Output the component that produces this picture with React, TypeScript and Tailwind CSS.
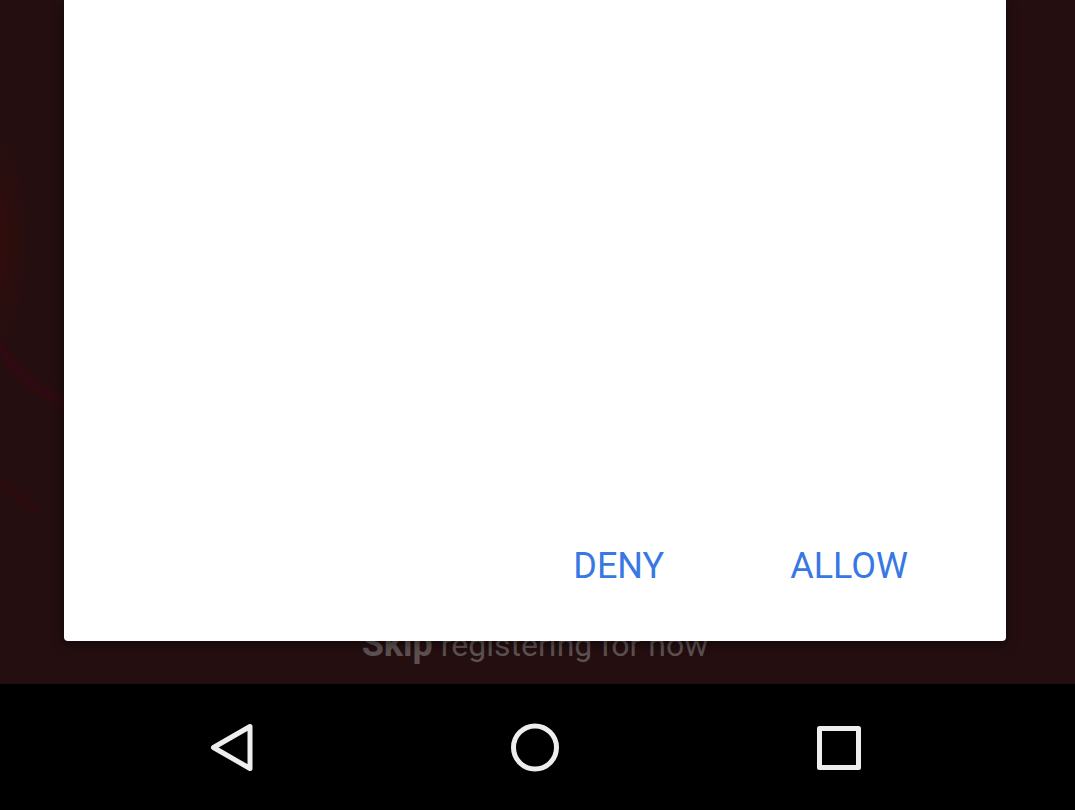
function Backdrop() {
  return (
    <svg className="absolute left-0 top-0 h-full w-16" viewBox="0 0 64 684" preserveAspectRatio="none" fill="none" aria-hidden="true">
      <defs>
        <radialGradient id="ember">
          <stop offset="0" stopColor="#3a0c08" stopOpacity="0.6" />
          <stop offset="1" stopColor="#3a0c08" stopOpacity="0" />
        </radialGradient>
        <filter id="soften" x="-50%" y="-50%" width="200%" height="200%">
          <feGaussianBlur stdDeviation="4" />
        </filter>
      </defs>
      <ellipse cx="0" cy="240" rx="30" ry="120" fill="url(#ember)" />
      <g filter="url(#soften)" stroke="#450a12" strokeWidth="7">
        <path d="M-6 340C16 370 34 392 70 404" opacity="0.5" />
        <path d="M-8 474C4 486 22 502 40 512" opacity="0.3" />
      </g>
    </svg>
  );
}

function PermissionDialog() {
  return (
    <section
      role="dialog"
      aria-label="Permission request"
      className="relative z-10 flex flex-1 flex-col justify-end rounded-b-[4px] bg-white pb-[47px] pl-20 pr-[82px] shadow-[0_2px_12px_rgba(0,0,0,0.55)]"
    >
      <div className="flex justify-end gap-[86px] text-[36px] leading-14 text-[#3778e4]">
        <button type="button" className="px-6">DENY</button>
        <button type="button" className="px-4">ALLOW</button>
      </div>
    </section>
  );
}

function NavigationBar() {
  const button = "flex size-16 items-center justify-center";
  const icon = "size-14";
  return (
    <nav aria-label="System navigation" className="flex h-[126px] items-center justify-center gap-60 bg-black pr-[6px] text-[#eeeeee]">
      <button type="button" aria-label="Back" className={button}>
        <svg className={icon} viewBox="0 0 56 56" fill="none" stroke="currentColor" strokeWidth="5" strokeLinejoin="round">
          <path d="M10.5 28.5 47 7.5V49.5Z" />
        </svg>
      </button>
      <button type="button" aria-label="Home" className={button}>
        <svg className={icon} viewBox="0 0 56 56" fill="none" stroke="currentColor" strokeWidth="5">
          <circle cx="28" cy="28.5" r="21.5" />
        </svg>
      </button>
      <button type="button" aria-label="Recent apps" className={button}>
        <svg className={icon} viewBox="0 0 56 56" fill="none" stroke="currentColor" strokeWidth="5" strokeLinejoin="round">
          <path d="M8.5 9.5H47.5V48.5H8.5Z" />
        </svg>
      </button>
    </nav>
  );
}

export default function App() {
  return (
    <div className="flex min-h-screen flex-col bg-black font-['Roboto',sans-serif]">
      <main className="relative flex flex-1 flex-col bg-[#240e10] pl-16 pr-[69px]">
        <Backdrop />
        <PermissionDialog />
        <p className="relative -mt-[17px] h-[60px] whitespace-nowrap text-center text-[32px] leading-10 text-[#5c5150]">
          <a href="#skip"><strong className="text-[36px] font-bold">Skip</strong> registering for now</a>
        </p>
      </main>
      <NavigationBar />
    </div>
  );
}
